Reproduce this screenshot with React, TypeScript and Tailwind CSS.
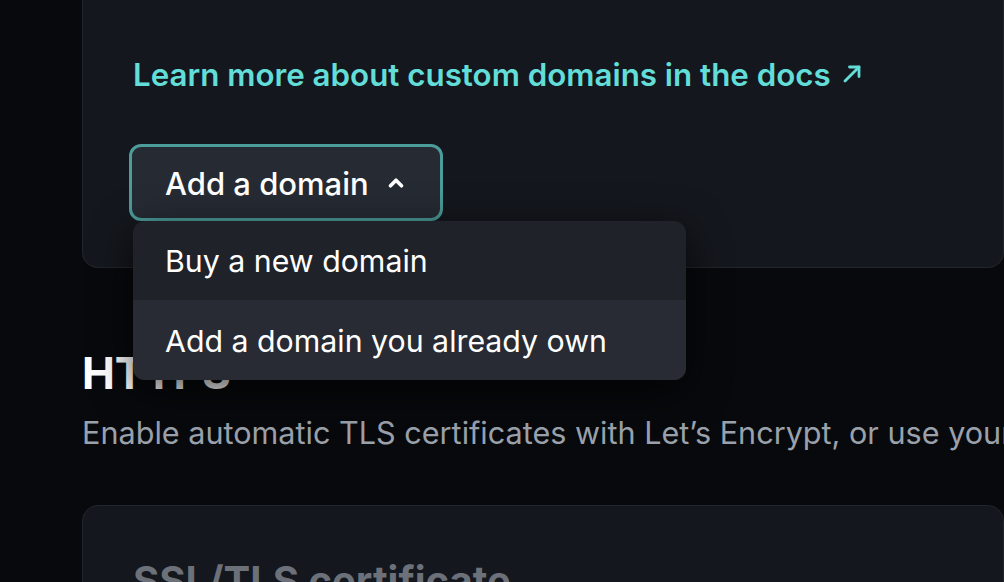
import React from "react";
import { ChevronUp } from "lucide-react";

export default function App() {
  return (
    <div className="h-[582px] w-[1004px] overflow-hidden bg-[#07090c] font-['Inter','Noto_Sans',sans-serif] antialiased">
      <div className="pl-[82px]">
        {/* custom domains card */}
        <div className="rounded-b-2xl border border-t-0 border-[#22252c] bg-[#14171d] pl-[46px] pt-[55px] pb-[46px]">
          <a className="flex items-center gap-[11px] pl-[4px] text-[31.3px] leading-[40px] font-semibold text-[#62ddd7]">
            Learn more about custom domains in the docs
            <svg width="20" height="20" viewBox="0 0 20 20" fill="none" stroke="currentColor" strokeWidth="2.8" strokeLinecap="round" strokeLinejoin="round" className="mb-[2px]">
              <path d="M3 17 17 3" />
              <path d="M7.5 3H17v9.5" />
            </svg>
          </a>

          <div className="relative mt-[49px] inline-block">
            <button className="flex h-[77px] items-center gap-[16px] rounded-xl border-[3px] border-[#4b9c9a] bg-[#262b33] pl-[33px] pr-[33px] pt-[3px] text-[31px] font-medium text-white">
              Add a domain
              <ChevronUp size={22} strokeWidth={4} className="mb-[3px]" />
            </button>

            <div className="absolute left-[4px] top-[77px] z-10 w-[553px] overflow-hidden rounded-xl bg-[#1f2229] shadow-[0_10px_40px_rgba(0,0,0,0.7)]">
              <div className="flex h-[79px] items-center pl-[32px] pt-[3px] text-[30.3px] text-white">Buy a new domain</div>
              <div className="flex h-[80px] items-center bg-[#282b33] pl-[32px] pt-[3px] text-[30.3px] text-white">
                Add a domain you already own
              </div>
            </div>
          </div>
        </div>

        {/* HTTPS section */}
        <h2 className="mt-[79px] text-[44px] leading-[52px] font-bold text-white">HTTPS</h2>
        <p className="mt-[16px] whitespace-nowrap text-[30.6px] leading-[36px] text-[#9ba1ab]">
          Enable automatic TLS certificates with Let’s Encrypt, or use your own certificate.
        </p>

        <div className="mt-[54px] h-[200px] rounded-t-2xl border border-[#22252c] bg-[#14171d] pl-[50px] pt-[51px]">
          <h3 className="text-[40px] leading-[48px] font-bold text-[#6b7079]">SSL/TLS certificate</h3>
        </div>
      </div>
    </div>
  );
}
